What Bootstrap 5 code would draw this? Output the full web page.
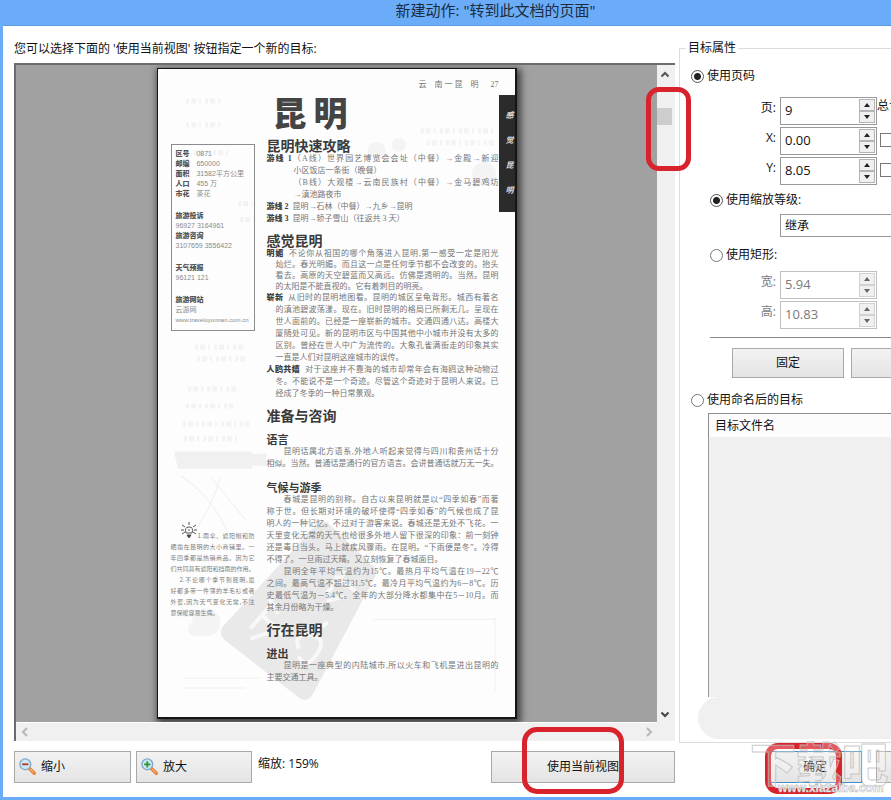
<!DOCTYPE html>
<html lang="zh-CN">
<head>
<meta charset="utf-8">
<meta name="viewport" content="width=device-width, initial-scale=1">
<title>新建动作: "转到此文档的页面"</title>
<link rel="stylesheet" href="https://cdn.jsdelivr.net/npm/bootstrap@5.3.0/dist/css/bootstrap.min.css">
<style>
body{font:12px/18px "Open Sans","Noto Sans CJK SC",sans-serif;color:#111;background:#6aacf7}
.dlg{min-height:100vh;border:3px solid #6aacf7;border-top:0;border-right:0;overflow:hidden}
.titlebar{height:26px;line-height:20px;font-size:15px;padding-left:97px;color:#1c2c40;background:#6aacf7;border-bottom:1px solid #5b9ae0}
.client{background:#fff;padding:13px 0 14px 11px;gap:4px}
.leftside{min-width:0}
.intro{line-height:20px;margin-bottom:4px}
.viewer{border-left:2px solid #6b6b70;border-top:2px solid #6b6b70;background:#f0f0f0;display:grid;grid-template-columns:1fr 18px;grid-template-rows:1fr 18px}
.canvas{background:#a1a1a1;padding:3px 0 3px;border-bottom:1px solid #fff;overflow:hidden}
.vbar{padding:4px 0 2px}
.thumb{width:15px;height:17px;background:#cdcdcd;margin-top:29px}
.hbar{padding:0 4px 0 5px}
.ring{position:absolute;border:5px solid #d8232c;border-radius:13px;pointer-events:none;z-index:5}
.ring-a{left:-11px;top:22px;width:45px;height:84px}
.ring-b{left:31px;top:-24px;width:102px;height:67px;border-radius:15px}
.ring-c{left:-3px;top:-8px;width:77px;height:51px;border-width:6px}
.wbtn{font-size:12px;line-height:18px;height:32px;padding:0;border:1px solid #a9a9a9;border-radius:0;background:linear-gradient(#f2f2f2,#e4e4e4);color:#111}
.wbtn-ok{border-color:#3c8fcc}
.botbar{margin-top:10px}
.zoomout{width:117px}
.zoomin{width:116px;margin-left:5px}
.zoomtxt{margin:4px 0 0 6px}
.curview{width:184px}
/* scanned page */
.paper{position:relative;width:360px;margin:0 auto;background:#fdfdfd;border:1px solid #151515;border-width:1px 2px 2px 1px;box-shadow:2px 3px 7px 2px rgba(0,0,0,.6);padding:10px 20px 33px 13px;display:grid;grid-template-columns:84px 1fr;column-gap:12px;font:8px/12px "Liberation Serif","Noto Sans CJK SC",serif;color:#757575;overflow:hidden}
.ghost{position:absolute;left:0;top:0;width:100%;height:100%}
.paper p{margin:0}
.paper .ln,.paper .ends{display:block;white-space:nowrap;text-align:justify;text-align-last:justify}
.paper .ends{text-align-last:left}
.in1{padding-left:27px}.in2{padding-left:9px}.in3{padding-left:17px}
.paper b{font-weight:900;color:#3f3f3f}
.paper h2,.paper h3,.paper h4{font-family:"Noto Sans CJK SC",sans-serif;color:#3a3a3a;font-weight:700;margin:0}
.paper h2{font-size:34px;line-height:36px;width:75px;margin:3px 0 1px 6px;font-weight:900;color:#444;white-space:nowrap;text-align-last:justify}
.paper h3{font-size:14px;line-height:14px;margin:8px 0 1px}
.paper h4{font-size:11px;line-height:12px;margin:11px 0 1px}
.tight{line-height:11px}
.side,.main{position:relative}
.facts{margin-top:65px;border:1px solid #8c8c8c;padding:4px 0 2px 4px;font:7px/10px "Liberation Sans","Noto Sans CJK SC",sans-serif;color:#8a8a8a;height:187px;white-space:nowrap}
.facts b{color:#555;margin-right:5px}
.facts div{margin-bottom:12px}
.facts div:last-child{margin:0}
.facts .url{font-size:6px}
.tips{margin-top:199px;font:6px/11px "Noto Sans CJK SC",sans-serif;color:#808080;position:relative}
.tips svg{position:absolute;left:9px;top:-8px}
.tab{position:absolute;right:0;top:26px;width:16px;height:117px;background:#2b2b2b;color:#ddd;font:italic 700 8px/25px "Noto Sans CJK SC",sans-serif;padding:7px 0 0 7px;white-space:nowrap}
/* destination properties */
.props{width:212px;overflow:hidden;padding-bottom:14px;margin-bottom:-14px}
.grp{border:1px solid #dcdcdc;border-right:0;padding:0 0 1px 11px}
.grp legend{float:none;width:auto;font-size:12px;line-height:18px;margin:0 0 0 -5px;padding:0 2px;background:#fff}
.form-check-input.rd{width:13px;height:13px;margin:0 3px 0 0;border:1px solid #777;float:none;flex:none;background-image:none!important;background-color:#fff;box-shadow:none}
.form-check-input.rd:checked{border-color:#555;background:radial-gradient(#222 0 3px,#fff 4px)!important}
.opt{display:flex;align-items:center;height:18px}
.nested{margin-left:19px}
.fieldrow{display:flex;align-items:flex-start;margin-bottom:2px;white-space:nowrap}
.fieldrow .cap{flex:none;width:86px;text-align:right;margin-right:3px;line-height:22px;padding-right:1px}
.spin{display:flex;width:97px;height:28px;flex:none;border:1px solid #999;background:#fff;padding:1px}
.spin input{border:0;padding:0 3px;width:77px;min-width:0;font:13px/18px "Open Sans",sans-serif;color:#111;height:21px;background:#fff}
.spin button{display:block;width:16px;height:12px;border:1px solid #b4b4b4;background:#f0f0f0;padding:0;line-height:0}
.spin svg{display:block;margin:auto}
.off,.off input{color:#7a7a7a!important}
.off .spin{border-color:#c0c0c0}
.off .spin button{border-color:#d2d2d2}
.sqr{width:14px;height:14px;margin:6px 0 0 3px;border:1px solid #777;appearance:none;background:#fff;flex:none}
.lvl{appearance:none;border:1px solid #999;border-radius:0;width:180px;height:23px;margin:5px 0 0 89px;padding:0 4px;font-size:12px;background:#fff;color:#111;display:block}
.sep{margin:8px 0 10px 19px;border-top:1px solid #888;opacity:1}
.named{margin:4px 0 0 17px}
.named table{width:100%}
.named th{display:block;font-weight:400;height:24px;line-height:24px;padding:0 0 0 6px;background:#fcfcfd;border:1px solid #8c8c8c;border-width:1px 0 0 1px}
.listbody{height:260px;background:#f0f0f0;border-left:1px solid #999}
.blob{height:42px;margin-left:-10px;background:#f0f0f0;border-radius:21px 0 0 21px}
.first{margin-top:10px}
.pagerow{margin-top:12px}
.zoomrow{margin-top:6px}
.rectrow{margin-top:9px}
.widthrow{margin-top:7px}
.namedrow{margin-top:13px}
.pairbtn{margin-left:41px;gap:7px}
.pairbtn .wbtn{width:112px;height:30px;flex:none}
.okbar{margin:8px 0 0 89px;gap:14px}
.okbox,.cancel{width:94px;flex:none}
.wm{position:absolute;left:-18px;top:-14px;z-index:6;pointer-events:none}
</style>
<script src="https://cdn.jsdelivr.net/npm/bootstrap@5.3.0/dist/js/bootstrap.bundle.min.js"></script>
</head>
<body>
<div class="dlg d-flex flex-column">
<header class="titlebar text-center">新建动作: "转到此文档的页面"</header>
<div class="client d-flex flex-grow-1">
<main class="leftside d-flex flex-column flex-grow-1">
<div class="intro">您可以选择下面的 '使用当前视图' 按钮指定一个新的目标:</div>
<div class="viewer flex-grow-1">
<div class="canvas">
<article class="paper">
<svg class="ghost" viewBox="0 0 356 650" preserveAspectRatio="none" aria-hidden="true">
<path d="M64 560 158 457Q163 452 169 455L214 498Q220 503 216 510L154 628Q149 636 141 631L68 574Q60 568 64 560Z" fill="#e9e9e9"/>
<g fill="none" stroke="#f8f8f8" stroke-width="4" stroke-linecap="round"><path d="M93 560l21-24M106 550l17 16M94 571l17-6M112 532l7 13M169 525l21-24M178 510l18 13M170 533l14-3M140 580q-5-14 12-12t7 18-18 5M149 568l19-12"/></g>
<path d="M16 384h78v17H20zM94 386h14v12H94z" fill="#f0f0f0"/>
<g fill="none" stroke="#f3f3f3" stroke-width="5" stroke-dasharray="3 2 5 3 2 4"><path d="M28 32h38M28 56h38M36 84h34M262 62h76M268 74h68M80 135h14M82 151h16M37 279h50M39 291h48M30 321h50M28 338h47M25 356h66M26 371h56"/></g>
<g fill="none" stroke="#f0f0f0"><path d="M23 408q32 22 47 58M62 410q-12 40-32 60M53 410l34 42M26 611h75M27 621h60M336 550v76M215 552h122"/></g>
<g fill="#f4f4f4"><circle cx="48" cy="555" r="14"/><circle cx="37" cy="562" r="7"/><circle cx="218" cy="82" r="9"/><circle cx="240" cy="76" r="7"/><circle cx="325" cy="105" r="12"/></g>
</svg>
<aside class="side">
<div class="facts">
<div><b>区号</b> 0871<br><b>邮编</b> 650000<br><b>面积</b> 31582平方公里<br><b>人口</b> 455 万<br><b>市花</b> 茶花</div>
<div><b>旅游投诉</b><br>96927 3164961<br><b>旅游咨询</b><br>3107659 3556422</div>
<div><b>天气预报</b><br>96121 121</div>
<div><b>旅游网站</b><br>云游网<br><span class="url">www.traveloyunnan.com.cn</span></div>
</div>
<div class="tips">
<svg width="18" height="17" viewBox="0 0 18 17" fill="none" stroke="#555" aria-hidden="true"><path d="M6 11Q4 5 9 5t3 6zM9 0v3M2 3l3 2M16 3l-3 2M1 8h3M14 8h3M2 12l3-2M16 12l-3-2M8 8h2"/><path d="M7 13h4l-2 3z" fill="#333"/></svg>
<p><span class="ln in1">1.雨伞、遮阳帽和防</span><span class="ln">晒霜在昆明的大小商铺里。一</span><span class="ln">年四季都是热销商品。因为它</span><span class="ln">们共同具有遮阳和挡雨的作用。</span></p>
<p><span class="ln in2">2.不论哪个季节到昆明,最</span><span class="ln">好都多带一件薄的羊毛衫或者</span><span class="ln">外套,因为天气变化无常,不注</span><span class="ends">意保暖容易生病。</span></p>
</div>
</aside>
<section class="main">
<div class="text-end">云&nbsp; &nbsp; 南 一 昆 &nbsp; &nbsp;明 &nbsp; &nbsp; &nbsp;27</div>
<h2>昆明</h2>
<h3>昆明快速攻略</h3>
<p><span class="ln"><b>游线 1</b>（A线）世界园艺博览会会址（中餐）→金殿→新迎</span><span class="ends in1">小区饭店一条街（晚餐）</span><span class="ln in1">（B线）大观楼→云南民族村（中餐）→金马碧鸡坊</span><span class="ends in1">→滇池路夜市</span><span class="ends"><b>游线 2</b>&nbsp; 昆明→石林（中餐）→九乡→昆明</span><span class="ends"><b>游线 3</b>&nbsp; 昆明→轿子雪山（往返共 3 天）</span></p>
<h3>感觉昆明</h3>
<p class="tight"><span class="ln"><b>明媚</b>&nbsp; 不论你从祖国的哪个角落进入昆明,第一感受一定是阳光</span><span class="ln in2">灿烂。春光明媚。而且这一点是任何季节都不会改变的。抬头</span><span class="ln in2">看去。高原的天空碧蓝而又高远。仿佛是透明的。当然。昆明</span><span class="ends in2">的太阳是不能直视的。它有着刺目的明亮。</span></p>
<p><span class="ln"><b>崭新</b>&nbsp; 从旧时的昆明地图看。昆明的城区呈龟背形。城西有著名</span><span class="ln in2">的滇池碧波荡漾。现在。旧时昆明的格局已所剩无几。呈现在</span><span class="ln in2">世人面前的。已经是一座崭新的城市。交通四通八达。高楼大</span><span class="ln in2">厦随处可见。新的昆明市区与中国其他中小城市并没有太多的</span><span class="ln in2">区别。曾经在世人中广为流传的。大象孔雀满街走的印象其实</span><span class="ends in2">一直是人们对昆明这座城市的误传。</span></p>
<p><span class="ln"><b>人鸥共嬉</b>&nbsp; 对于这座并不靠海的城市却常年会有海鸥这种动物过</span><span class="ln in2">冬。不能说不是一个奇迹。尽管这个奇迹对于昆明人来说。已</span><span class="ends in2">经成了冬季的一种日常景观。</span></p>
<h3>准备与咨询</h3>
<h4>语言</h4>
<p><span class="ln in3">昆明话属北方语系,外地人听起来觉得与四川和贵州话十分</span><span class="ln">相似。当然。普通话是通行的官方语言。会讲普通话就万无一失。</span></p>
<h4>气候与游季</h4>
<p><span class="ln in3">春城是昆明的别称。自古以来昆明就是以“四季如春”而著</span><span class="ln">称于世。但长期对环境的破坏使得“四季如春”的气候也成了昆</span><span class="ln">明人的一种记忆。不过对于游客来说。春城还是无处不飞花。一</span><span class="ln">天里变化无常的天气也给很多外地人留下很深的印象：前一刻钟</span><span class="ln">还是毒日当头。马上就疾风骤雨。在昆明。“下雨便是冬”。冷得</span><span class="ends">不得了。一旦雨过天晴。又立刻恢复了春城面目。</span></p>
<p><span class="ln in3">昆明全年平均气温约为15℃。最热月平均气温在19－22℃</span><span class="ln">之间。最高气温不超过31.5℃。最冷月平均气温约为6－8℃。历</span><span class="ln">史最低气温为－5.4℃。全年的大部分降水都集中在5－10月。而</span><span class="ends">其余月份略为干燥。</span></p>
<h3>行在昆明</h3>
<h4>进出</h4>
<p><span class="ln in3">昆明是一座典型的内陆城市,所以火车和飞机是进出昆明的</span><span class="ends">主要交通工具。</span></p>
</section>
<div class="tab">感<br>觉<br>昆<br>明</div>
</article>
</div>
<div class="vbar position-relative d-flex flex-column">
<svg width="16" height="10" fill="none" stroke="#555" stroke-width="2" aria-hidden="true"><path d="M4.500 7.500 8 4l3.500 3.500"/></svg>
<div class="thumb"></div>
<svg class="mt-auto" width="16" height="12" fill="none" stroke="#444" stroke-width="2" aria-hidden="true"><path d="M4.500 3.500 8 7l3.500-3.500"/></svg>
<div class="ring ring-a"></div>
</div>
<div class="hbar d-flex justify-content-between align-items-center">
<svg width="8" height="10" fill="none" stroke="#b8b8b8" stroke-width="2" aria-hidden="true"><path d="M6 1 2 5l4 4"/></svg>
<svg width="8" height="10" fill="none" stroke="#b8b8b8" stroke-width="2" aria-hidden="true"><path d="M2 1l4 4-4 4"/></svg>
</div>
<div></div>
</div>
<div class="botbar d-flex">
<button class="btn wbtn zoomout d-flex align-items-center" type="button"><svg width="18" height="20" class="ms-1 me-1" viewBox="0 0 20 20" aria-hidden="true"><path d="M11 11l6 6" stroke="#e9873c" stroke-width="4" stroke-linecap="round"/><path d="M12 12l4 4" stroke="#ffc28d" stroke-width="1"/><circle cx="7" cy="7" r="6" fill="#cfe6f6" stroke="#7fa9c9" stroke-width="1.500"/><path d="M3.500 7h7" stroke="#b5381c" stroke-width="2"/></svg>缩小</button>
<button class="btn wbtn zoomin d-flex align-items-center" type="button"><svg width="18" height="20" class="ms-1 me-1" viewBox="0 0 20 20" aria-hidden="true"><path d="M11 11l6 6" stroke="#e9873c" stroke-width="4" stroke-linecap="round"/><path d="M12 12l4 4" stroke="#ffc28d" stroke-width="1"/><circle cx="7" cy="7" r="6" fill="#cfe6f6" stroke="#7fa9c9" stroke-width="1.500"/><path d="M3.500 7h7M7 3.500v7" stroke="#2b9636" stroke-width="2"/></svg>放大</button>
<span class="zoomtxt">缩放: 159%</span>
<div class="position-relative ms-auto curview"><button class="btn wbtn w-100" type="button">使用当前视图</button><div class="ring ring-b"></div></div>
</div>
</main>
<aside class="props d-flex flex-column">
<fieldset class="grp flex-grow-1">
<legend>目标属性</legend>
<div class="opt first"><input class="form-check-input rd" type="radio" name="kind" id="k1" checked><label for="k1">使用页码</label></div>
<div class="fieldrow pagerow"><label class="cap" for="pg">页:</label><div class="spin"><input id="pg" value="9"><div><button type="button" aria-label="增加"><svg width="6" height="4"><path d="M0 4 3 0l3 4z" fill="#222"/></svg></button><button type="button" aria-label="减少"><svg width="6" height="4"><path d="M0 0h6L3 4z" fill="#222"/></svg></button></div></div><span>总计</span></div>
<div class="fieldrow"><label class="cap" for="px">X:</label><div class="spin"><input id="px" value="0.00"><div><button type="button" aria-label="增加"><svg width="6" height="4"><path d="M0 4 3 0l3 4z" fill="#222"/></svg></button><button type="button" aria-label="减少"><svg width="6" height="4"><path d="M0 0h6L3 4z" fill="#222"/></svg></button></div></div><input class="sqr" type="checkbox" aria-label="X"></div>
<div class="fieldrow"><label class="cap" for="py">Y:</label><div class="spin"><input id="py" value="8.05"><div><button type="button" aria-label="增加"><svg width="6" height="4"><path d="M0 4 3 0l3 4z" fill="#222"/></svg></button><button type="button" aria-label="减少"><svg width="6" height="4"><path d="M0 0h6L3 4z" fill="#222"/></svg></button></div></div><input class="sqr" type="checkbox" aria-label="Y"></div>
<div class="opt nested zoomrow"><input class="form-check-input rd" type="radio" name="size" id="s1" checked><label for="s1">使用缩放等级:</label></div>
<select class="lvl" aria-label="缩放等级"><option>继承</option></select>
<div class="opt nested rectrow"><input class="form-check-input rd" type="radio" name="size" id="s2"><label for="s2">使用矩形:</label></div>
<div class="fieldrow off widthrow"><label class="cap" for="pw">宽:</label><div class="spin"><input id="pw" value="5.94" readonly><div><button type="button" aria-label="增加"><svg width="6" height="4"><path d="M0 4 3 0l3 4z" fill="#666"/></svg></button><button type="button" aria-label="减少"><svg width="6" height="4"><path d="M0 0h6L3 4z" fill="#666"/></svg></button></div></div></div>
<div class="fieldrow off"><label class="cap" for="ph">高:</label><div class="spin"><input id="ph" value="10.83" readonly><div><button type="button" aria-label="增加"><svg width="6" height="4"><path d="M0 4 3 0l3 4z" fill="#666"/></svg></button><button type="button" aria-label="减少"><svg width="6" height="4"><path d="M0 0h6L3 4z" fill="#666"/></svg></button></div></div></div>
<hr class="sep">
<div class="d-flex pairbtn"><button class="btn wbtn" type="button">固定</button><button class="btn wbtn" type="button" aria-label="更多"></button></div>
<div class="opt namedrow"><input class="form-check-input rd" type="radio" name="kind" id="k2"><label for="k2">使用命名后的目标</label></div>
<div class="named"><table><thead><tr><th>目标文件名</th></tr></thead></table><div class="listbody"></div><div class="blob"></div></div>
</fieldset>
<div class="d-flex okbar"><div class="position-relative okbox"><button class="btn wbtn wbtn-ok w-100" type="button">确定</button><div class="ring ring-c"></div>
<svg class="wm" width="150" height="60" aria-hidden="true"><g font-family="Noto Sans CJK SC" font-weight="900" font-size="46" fill="#fff" fill-opacity=".25" stroke="#bdbdbd" stroke-opacity=".8"><text x="0" y="44">下载吧</text></g><text x="28" y="55" font-family="Liberation Sans" font-weight="700" font-size="12" fill="#fff" stroke="#bbb" stroke-width=".6">www.xiazaiba.com</text></svg></div>
<button class="btn wbtn cancel" type="button" aria-label="取消"></button></div>
</aside>
</div>
</div>
</body>
</html>
